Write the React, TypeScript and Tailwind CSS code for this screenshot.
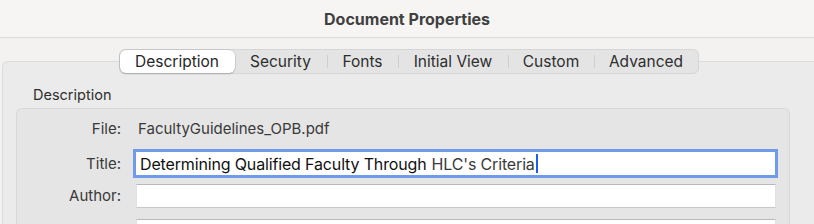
import React from "react";

const tabs = [
  { label: "Description", width: "w-[115px]" },
  { label: "Security", width: "w-[92px]" },
  { label: "Fonts", width: "w-[71px]" },
  { label: "Initial View", width: "w-[110px]" },
  { label: "Custom", width: "w-[86px]" },
  { label: "Advanced", width: "w-[104px]" },
];

function SegmentedTabs() {
  return (
    <div className="flex h-[25px] items-stretch rounded-[6px] border border-[#d6d6d6] bg-[#e4e4e4]">
      {tabs.map((tab, i) => {
        const selected = i === 0;
        const showSep = i > 1;
        return (
          <div key={tab.label} className={`relative flex items-center ${tab.width}`}>
            {showSep && <div className="h-[13px] w-px bg-[#cfcfcf]" />}
            <div
              className={
                selected
                  ? "flex h-full flex-1 items-center justify-center rounded-[6px] bg-white text-[15.5px] text-[#262626] shadow-[0_0_0_0.5px_rgba(0,0,0,0.12),0_1px_2px_rgba(0,0,0,0.18)]"
                  : "flex h-full flex-1 items-center justify-center text-[15.5px] text-[#2e2e2e]"
              }
            >
              {tab.label}
            </div>
          </div>
        );
      })}
    </div>
  );
}

function Row({
  label,
  className = "",
  children,
}: {
  label: string;
  className?: string;
  children: React.ReactNode;
}) {
  return (
    <div className={`flex items-center ${className}`}>
      <div className="w-[104px] shrink-0 text-right text-[15px] leading-[20px] text-[#3a3a3a]">{label}</div>
      <div className="ml-[15px] flex-1">{children}</div>
    </div>
  );
}

export default function App() {
  return (
    <div
      className="flex h-[224px] w-[814px] flex-col overflow-hidden bg-[#f3f2f1]"
      style={{ fontFamily: "Inter, 'Liberation Sans', sans-serif" }}
    >
      <div className="flex h-[38px] shrink-0 items-center justify-center border-b border-[#dcdbda] bg-[#f6f5f4]">
        <span className="text-[16px] font-bold text-[#404040]">Document Properties</span>
      </div>

      <div className="flex flex-1 flex-col pt-[11px]">
        <div className="relative z-10 flex justify-center pl-[3px]">
          <SegmentedTabs />
        </div>

        <div className="ml-[2px] mt-[-13px] flex flex-1 flex-col rounded-tl-[6px] border-l border-t border-[#dcdcdc] bg-[#ebebeb] pl-[13px] pt-[24px]">
          <div className="pl-[17px] text-[14.5px] leading-[18px] text-[#2f2f2f]">Description</div>

          <div className="mt-[4px] mr-[24px] flex flex-1 flex-col rounded-t-[6px] border-l border-r border-t border-[#d8d8d8] bg-[#e5e5e5] pt-[9px]">
            <Row label="File:">
              <div className="pl-[2px] text-[15px] leading-[22px] text-[#3a3a3a]">FacultyGuidelines_OPB.pdf</div>
            </Row>

            <Row label="Title:" className="mt-[12px]">
              <div className="mr-[14px] flex h-[23px] items-center bg-white pl-[4px] text-[16px] tracking-[-0.15px] shadow-[0_0_0_3px_#6f9be8]">
                <span className="text-[#111111]">Determining Qualified Faculty Through</span>
                <span className="ml-[5px] text-[#3b3b3b]">HLC's Criteria</span>
                <span className="ml-[1px] h-[19px] w-[2px] bg-[#1d5fe0]" />
              </div>
            </Row>

            <Row label="Author:" className="mt-[9px]">
              <div className="mr-[13px] h-[24px] border border-t-[#b9b9b9] border-x-[#e2e2e2] border-b-[#c9c9c9] bg-white" />
            </Row>

            <Row label="" className="mt-[11px]">
              <div className="mr-[13px] h-[24px] border border-t-[#b9b9b9] border-x-[#e2e2e2] border-b-[#c9c9c9] bg-white" />
            </Row>
          </div>
        </div>
      </div>
    </div>
  );
}
